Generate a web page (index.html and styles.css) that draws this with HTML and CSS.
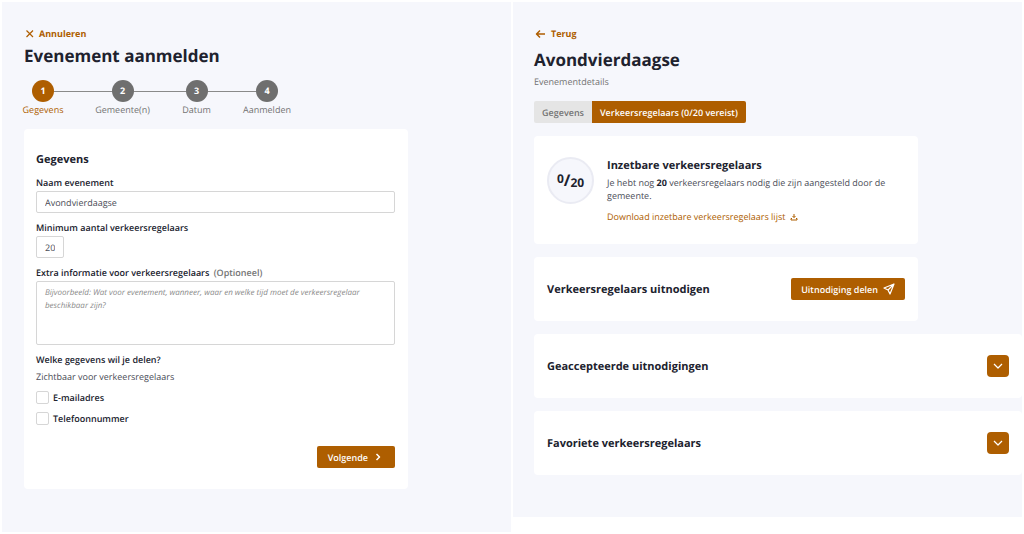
FILE: index.html
```html
<!DOCTYPE html>
<html lang="nl">
<head>
<meta charset="utf-8">
<meta name="viewport" content="width=device-width, initial-scale=1">
<title>Evenement aanmelden</title>
<link rel="stylesheet" href="styles.css">
</head>
<body>
<div class="screens">
  <main class="panel panel-form">
    <a class="back" href="#"><svg class="icon" viewBox="0 0 12 12"><path d="M2.500 2.500l6.500 6.500M9 2.500l-6.500 6.500"/></svg>Annuleren</a>
    <h1 class="title">Evenement aanmelden</h1>
    <ol class="steps">
      <li class="step step-active"><span class="marker"><span class="dot">1</span></span>Gegevens</li>
      <li class="step"><span class="marker"><span class="dot">2</span></span>Gemeente(n)</li>
      <li class="step"><span class="marker"><span class="dot">3</span></span>Datum</li>
      <li class="step"><span class="marker"><span class="dot">4</span></span>Aanmelden</li>
    </ol>
    <form class="card form">
      <h2 class="heading">Gegevens</h2>
      <div class="field">
        <label class="label" for="name">Naam evenement</label>
        <input class="input" id="name" type="text" value="Avondvierdaagse">
      </div>
      <div class="field">
        <label class="label" for="minimum">Minimum aantal verkeersregelaars</label>
        <input class="input input-short" id="minimum" type="text" inputmode="numeric" value="20">
      </div>
      <div class="field">
        <label class="label" for="info">Extra informatie voor verkeersregelaars <span class="optional">(Optioneel)</span></label>
        <textarea class="input textarea" id="info" placeholder="Bijvoorbeeld: Wat voor evenement, wanneer, waar en welke tijd moet de verkeersregelaar beschikbaar zijn?"></textarea>
      </div>
      <fieldset class="choices">
        <legend class="label">Welke gegevens wil je delen?</legend>
        <p class="hint">Zichtbaar voor verkeersregelaars</p>
        <label class="choice"><input class="check" type="checkbox">E-mailadres</label>
        <label class="choice"><input class="check" type="checkbox">Telefoonnummer</label>
      </fieldset>
      <button class="button next" type="button">Volgende<svg class="icon icon-bold" viewBox="0 0 12 12"><path d="M4.500 3l3 3-3 3"/></svg></button>
    </form>
  </main>

  <section class="panel panel-detail">
    <a class="back" href="#"><svg class="icon icon-bold" viewBox="0 0 12 12"><path d="M11 6H3M6 2.500L2.500 6L6 9.500"/></svg>Terug</a>
    <h1 class="title title-detail">Avondvierdaagse</h1>
    <p class="subtitle">Evenementdetails</p>
    <nav class="tabs">
      <button class="tab" type="button">Gegevens</button>
      <button class="tab tab-active" type="button">Verkeersregelaars (0/20 vereist)</button>
    </nav>
    <div class="cards">
      <article class="card status">
        <div class="counter"><span class="count">0</span><span class="slash">/</span><span class="total">20</span></div>
        <div class="status-text">
          <h2 class="heading">Inzetbare verkeersregelaars</h2>
          <p class="body">Je hebt nog <strong>20</strong> verkeersregelaars nodig die zijn aangesteld door de gemeente.</p>
          <a class="download" href="#">Download inzetbare verkeersregelaars lijst<svg class="icon-small" viewBox="0 0 8 8"><path d="M4 1v3.500M2.500 3L4 4.500L5.500 3M2 5.500H1v1.500h6V5.500H6"/></svg></a>
        </div>
      </article>
      <article class="card row">
        <h2 class="heading">Verkeersregelaars uitnodigen</h2>
        <button class="button share" type="button">Uitnodiging delen<svg class="icon" viewBox="0 0 12 12"><path d="M11 1L1 5l4 2 2 4zM11 1L5 7"/></svg></button>
      </article>
      <article class="card row row-wide">
        <h2 class="heading">Geaccepteerde uitnodigingen</h2>
        <button class="toggle" type="button" aria-label="Geaccepteerde uitnodigingen tonen"><svg class="icon" viewBox="0 0 12 12"><path d="M2 4l4 4 4-4"/></svg></button>
      </article>
      <article class="card row row-wide">
        <h2 class="heading">Favoriete verkeersregelaars</h2>
        <button class="toggle" type="button" aria-label="Favoriete verkeersregelaars tonen"><svg class="icon" viewBox="0 0 12 12"><path d="M2 4l4 4 4-4"/></svg></button>
      </article>
    </div>
  </section>
</div>
</body>
</html>
```
FILE: styles.css
```css
* { box-sizing: border-box; margin: 0; padding: 0; }

:root {
  --brand: #ae5e00;
  --ink: #20222e;
  --text: #4b4d57;
  --muted: #737373;
  --line: #d6d6d6;
  --surface: #f6f7fc;
}

body {
  background: #fff;
  color: var(--ink);
  font: 9px/13px "Open Sans", "Noto Sans", sans-serif;
  text-rendering: geometricPrecision;
}

button, input, textarea { font: inherit; color: inherit; text-rendering: inherit; }

.screens {
  display: grid;
  grid-template-columns: 1fr 1fr;
  gap: 2px;
  padding: 2px;
  align-items: start;
}

.panel { background: var(--surface); padding: 25px 0 43px 22px; }
.panel-detail { padding-left: 21px; padding-bottom: 42px; }

.icon {
  width: 12px;
  height: 12px;
  fill: none;
  stroke: currentColor;
  stroke-width: 1.200;
  stroke-linejoin: round;
}
.icon-bold { stroke-width: 1.500; }
.icon-small { width: 8px; height: 8px; fill: none; stroke: currentColor; }

.back {
  display: flex;
  align-items: center;
  gap: 3px;
  width: max-content;
  color: var(--brand);
  font-weight: 700;
  text-decoration: none;
}
.panel-detail .back { gap: 5px; }

.title { font-size: 17px; line-height: 24px; font-weight: 700; margin-top: 4px; }
.title-detail { margin-top: 8px; }
.subtitle { color: var(--muted); margin-top: 3px; }

.steps { display: flex; list-style: none; margin: 12px 0 13px -17px; }
.step { min-width: 61px; text-align: center; color: var(--muted); }
.step:nth-child(1) { width: 72px; }
.step:nth-child(2) { width: 87px; }
.step:nth-child(4) { width: 80px; }
.marker { display: flex; align-items: center; margin-bottom: 1px; }
.marker::before, .marker::after { content: ""; flex: 1; height: 1px; background: #8a8a8a; }
.step:first-child .marker::before, .step:last-child .marker::after { background: none; }
.dot {
  width: 22px;
  height: 22px;
  border-radius: 50%;
  background: #6f6f6f;
  color: #fff;
  font-weight: 700;
  line-height: 22px;
}
.step-active { color: var(--brand); }
.step-active .dot { background: var(--brand); }

.card { background: #fff; border-radius: 4px; max-width: 384px; padding: 21px 13px; }
.heading { font-size: 11px; line-height: 17px; font-weight: 700; }

.form { display: flex; flex-direction: column; padding-top: 22px; padding-left: 12px; }
.form .heading { margin-bottom: 8px; }
.field { display: flex; flex-direction: column; margin-bottom: 8px; }
.label { font-weight: 600; line-height: 13px; margin-bottom: 2px; }
.optional { color: var(--muted); margin-left: 2px; }
.input {
  width: 100%;
  height: 22px;
  padding: 0 8px;
  border: 1px solid var(--line);
  border-radius: 2px;
  background: #fff;
  color: var(--text);
}
.input-short { width: 28px; }
.textarea { height: 64px; padding: 4px 8px; resize: none; display: block; }
.textarea::placeholder { color: #8a8a8a; font-size: 8px; line-height: 13px; font-style: italic; }
.choices { border: 0; }
.hint { margin: 2px 0 8px; color: var(--text); }
.choice { display: flex; align-items: center; gap: 4px; margin-bottom: 8px; font-weight: 600; }
.check {
  appearance: none;
  width: 13px;
  height: 13px;
  border: 1px solid var(--line);
  border-radius: 2px;
  background: #fff;
}

.button {
  display: flex;
  align-items: center;
  height: 22px;
  padding: 0 11px;
  border: 0;
  border-radius: 2px;
  background: var(--brand);
  color: #fff;
  font-weight: 600;
}
.next { align-self: flex-end; gap: 4px; margin-top: 13px; }
.share { gap: 5px; padding: 0 10px; }

.tabs { display: flex; margin: 13px 0; }
.tab {
  height: 22px;
  padding: 0 8px;
  border: 0;
  border-radius: 2px 0 0 2px;
  background: #e5e5e5;
  color: var(--muted);
  font-weight: 600;
}
.tab-active { border-radius: 0 2px 2px 0; background: var(--brand); color: #fff; }

.cards { display: flex; flex-direction: column; gap: 13px; }
.status { display: flex; gap: 13px; }
.counter {
  display: flex;
  flex: none;
  justify-content: center;
  width: 47px;
  height: 47px;
  border: 2px solid #eaebf3;
  border-radius: 50%;
  background: var(--surface);
  font-size: 12px;
  line-height: 43px;
  font-weight: 700;
}
.slash { font-size: 16px; }
.count { line-height: 40px; }
.total { line-height: 48px; }
.body { color: var(--text); margin: 2px 0 8px; }
.body strong { color: var(--ink); }
.download { display: flex; align-items: center; gap: 5px; width: max-content; color: var(--brand); text-decoration: none; }
.row { display: flex; align-items: center; justify-content: space-between; }
.row-wide { max-width: none; }
.toggle {
  display: grid;
  place-items: center;
  width: 22px;
  height: 22px;
  border: 0;
  border-radius: 4px;
  background: var(--brand);
  color: #fff;
}
```
